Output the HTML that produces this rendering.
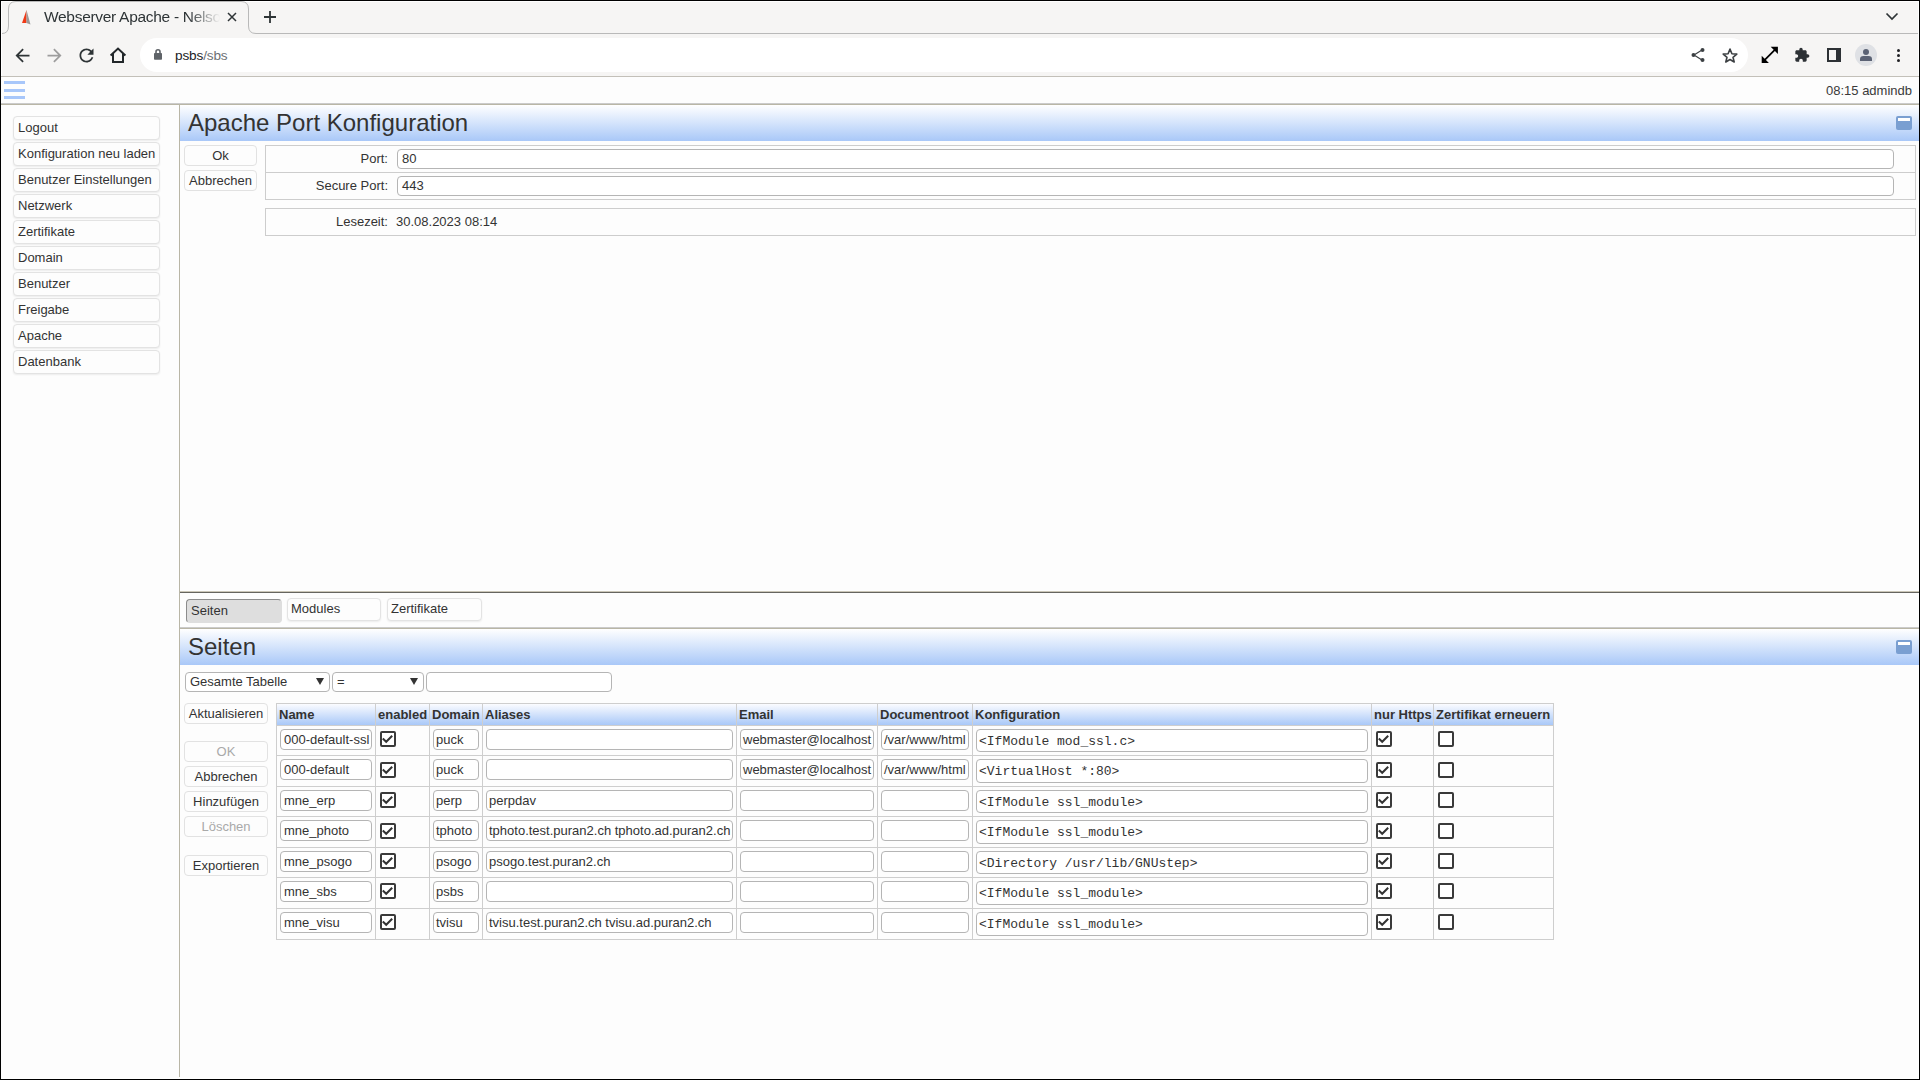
<!DOCTYPE html>
<html><head><meta charset="utf-8">
<style>
*{box-sizing:border-box;}
html,body{margin:0;padding:0;width:1920px;height:1080px;overflow:hidden;background:#000;}
body{font-family:"Liberation Sans",sans-serif;position:relative;}
.abs{position:absolute;}
#win{position:absolute;left:1px;top:1px;width:1918px;height:1078px;background:#fff;}
#tabstrip{position:absolute;left:2px;top:2px;width:1916px;height:32px;background:#f6f5f4;}
#tabline{position:absolute;left:256px;top:33px;width:1662px;height:1px;background:#b9b9b9;}
#toolbar{position:absolute;left:2px;top:34px;width:1916px;height:42px;background:#f6f5f4;}
#tbline{position:absolute;left:1px;top:76px;width:1918px;height:1px;background:#c3c0b9;}
#page{position:absolute;left:1px;top:77px;width:1917px;height:1001px;background:#fdfdfd;}
.omni{position:absolute;left:140px;top:38px;width:1608px;height:34px;border-radius:17px;background:#fff;}
.ttl{position:absolute;left:44px;top:7.8px;font-size:15.5px;letter-spacing:-0.3px;color:#2e3436;white-space:nowrap;width:182px;overflow:hidden;
 -webkit-mask-image:linear-gradient(to right,#000 144px,transparent 176px);}
.url{position:absolute;left:175px;top:47.5px;font-size:13.6px;letter-spacing:-0.15px;color:#202124;}
.url span{color:#6b6f74;}
.time{position:absolute;right:8px;top:83px;font-size:13px;color:#3a3a3a;}
.hamb{position:absolute;left:4px;width:21px;height:3px;background:#a8c7fa;}
.vline{position:absolute;left:179px;top:105px;width:1px;height:972px;background:#b9b6a6;}
.hline1{position:absolute;left:1px;top:103px;width:1918px;height:1px;background:#cbcbcb;}
.hline2{position:absolute;left:1px;top:104px;width:1918px;height:1px;background:#b9b6a6;}
.nav{position:absolute;left:13px;width:147px;height:24px;border:1px solid #e3e3e3;border-radius:4px;background:#fdfdfd;
 box-shadow:0 1px 2px rgba(0,0,0,0.07);font-size:13px;color:#333;padding-left:4px;line-height:21px;}
.btn{position:absolute;height:21px;border:1px solid #e2e2e2;border-radius:4px;background:#fdfdfd;font-size:13px;color:#333;text-align:center;line-height:19px;}
.btn.dis{color:#a9a9a9;}
.head{position:absolute;left:180px;width:1739px;height:36px;background:linear-gradient(#ffffff,#a9c8f8);}
.head .t{position:absolute;left:8px;top:4px;font-size:24px;color:#333;}
.mini{position:absolute;right:7px;top:11px;width:16px;height:14px;background:#7a9fd1;border-radius:2px;}
.mini::after{content:"";position:absolute;left:2px;top:2px;width:12px;height:3px;background:#fff;}
.box{position:absolute;border:1px solid #cdcdcd;}
.lbl{position:absolute;font-size:13px;color:#333;text-align:right;}
.inp{position:absolute;height:20px;border:1px solid #b5b5b5;border-radius:4px;background:#fff;font-size:13px;color:#333;padding-left:4px;line-height:18px;white-space:nowrap;overflow:hidden;}

.tab2{position:absolute;top:598px;height:23px;border:1px solid #e3e3e3;border-radius:4px;background:#fdfdfd;box-shadow:0 1px 2px rgba(0,0,0,0.07);font-size:13px;color:#333;padding-left:3px;line-height:20px;}
.tab2.sel{top:599px;height:24px;padding-left:4px;background:#dedede;border-color:#8c8c8c #dedede #dedede #8c8c8c;box-shadow:none;line-height:22px;}
.sel2{position:absolute;top:672px;height:20px;border:1px solid #b5b5b5;border-radius:4px;background:#fff;font-size:13px;color:#333;padding-left:4px;line-height:18px;}
.sel2 .ar{position:absolute;right:5px;top:5px;width:0;height:0;border-left:4px solid transparent;border-right:4px solid transparent;border-top:7px solid #333;}
.tcell{position:absolute;background:#cecece;}
.th{position:absolute;top:704px;height:21px;font-size:13px;font-weight:bold;color:#333;line-height:21px;padding-left:2px;white-space:nowrap;}
.cb{position:absolute;width:16px;height:16px;border:2px solid #3a3a3a;border-radius:2px;background:#fff;}
.cb svg{position:absolute;left:0;top:0;}
.mono{font-family:"Liberation Mono",monospace;}
</style></head>
<body>
<div id="win"></div>
<div id="tabstrip"></div>
<div id="tabline"></div>
<div id="toolbar"></div>
<div id="tbline"></div>
<div id="page"></div>

<!-- tab shape -->
<svg class="abs" style="left:0;top:0" width="270" height="36">
 <path d="M2 33.5 Q8.5 33.5 8.5 26 L8.5 9 Q8.5 1.5 16 1.5 L241 1.5 Q248.5 1.5 248.5 9 L248.5 26 Q248.5 33.5 256 33.5" fill="#f6f5f4" stroke="#b9b9b9" stroke-width="1"/>
</svg>
<!-- favicon -->
<svg class="abs" style="left:21px;top:9px" width="11" height="17"><path d="M5.5 1 L1 14 L5.5 14 Z" fill="#f03a17"/><path d="M5.5 1 L9.5 15.5 L5.5 14 Z" fill="#9a9a9a"/></svg>
<div class="ttl">Webserver Apache - Nelson Technologie</div>
<svg class="abs" style="left:226px;top:12px" width="12" height="10"><path d="M2 1 L10 9 M10 1 L2 9" stroke="#2e3436" stroke-width="1.5"/></svg>
<svg class="abs" style="left:263px;top:10px" width="14" height="14"><path d="M7 1 V13 M1 7 H13" stroke="#2e3436" stroke-width="1.8"/></svg>
<svg class="abs" style="left:1885px;top:12px" width="14" height="10"><path d="M1.5 1.5 L7 7 L12.5 1.5" fill="none" stroke="#2e3436" stroke-width="1.7"/></svg>

<!-- toolbar -->
<svg class="abs" style="left:11.5px;top:44.5px" width="21" height="21" viewBox="0 0 24 24"><path d="M20 11H7.83l5.59-5.59L12 4l-8 8 8 8 1.41-1.41L7.83 13H20v-2z" fill="#2e3436"/></svg>
<svg class="abs" style="left:43.5px;top:44.5px" width="21" height="21" viewBox="0 0 24 24"><path d="M12 4l-1.41 1.41L16.17 11H4v2h12.17l-5.58 5.59L12 20l8-8z" fill="#9d9d9d"/></svg>
<svg class="abs" style="left:75.5px;top:44.5px" width="21" height="21" viewBox="0 0 24 24"><path d="M17.65 6.35C16.2 4.9 14.21 4 12 4c-4.42 0-7.99 3.58-7.99 8s3.57 8 7.99 8c3.73 0 6.84-2.55 7.73-6h-2.08c-.82 2.33-3.04 4-5.650 4-3.31 0-6-2.69-6-6s2.69-6 6-6c1.66 0 3.14.69 4.22 1.780L13 11h7V4l-2.35 2.35z" fill="#2e3436"/></svg>
<svg class="abs" style="left:108px;top:45px" width="20" height="20"><path d="M2.6 10.6 L10 3.6 L17.4 10.6 M5 8.2 V17 H15 V8.2" fill="none" stroke="#22272a" stroke-width="2"/></svg>
<div class="omni"></div>
<svg class="abs" style="left:153px;top:48px" width="11" height="13"><path d="M3 6 V3.8 A2 2 0 0 1 7 3.8 V6" fill="none" stroke="#5f6368" stroke-width="1.6"/><rect x="1" y="5" width="8" height="6.8" rx="0.8" fill="#5f6368"/></svg>
<div class="url">psbs<span>/sbs</span></div>
<!-- share -->
<svg class="abs" style="left:1689.5px;top:47px" width="16" height="16"><path d="M12 3 L4 8 L12 13" fill="none" stroke="#3c4043" stroke-width="1.2"/><circle cx="12.5" cy="3" r="2" fill="#3c4043"/><circle cx="3.5" cy="8" r="2" fill="#3c4043"/><circle cx="12.5" cy="13" r="2" fill="#3c4043"/></svg>
<svg class="abs" style="left:1721px;top:46.5px" width="18" height="17"><path d="M9 2.1 L10.9 6.7 L15.8 7.1 L12 10.3 L13.2 15 L9 12.5 L4.8 15 L6 10.3 L2.2 7.1 L7.1 6.7 Z" fill="none" stroke="#3c4043" stroke-width="1.6" stroke-linejoin="round"/></svg>
<svg class="abs" style="left:1759.3px;top:44.3px" width="21.6" height="21.6" viewBox="0 0 24 24"><path d="M21 11V3h-8l3.29 3.29-10 10L3 13v8h8l-3.29-3.29 10-10z" fill="#000"/></svg>
<svg class="abs" style="left:1793.7px;top:47.3px" width="16" height="16" viewBox="0 0 24 24"><path d="M20.5 11H19V7c0-1.1-.9-2-2-2h-4V3.5C13 2.12 11.88 1 10.5 1S8 2.12 8 3.5V5H4c-1.1 0-1.99.9-1.99 2v3.8H3.5c1.49 0 2.7 1.210 2.7 2.7s-1.21 2.7-2.7 2.7H2V20c0 1.1.9 2 2 2h3.8v-1.5c0-1.49 1.21-2.7 2.7-2.7 1.49 0 2.7 1.21 2.7 2.7V22H17c1.1 0 2-.9 2-2v-4h1.5c1.38 0 2.5-1.12 2.5-2.5S21.88 11 20.5 11z" fill="#2d3135"/></svg>
<svg class="abs" style="left:1827px;top:48px" width="14" height="14"><path d="M0 0H14V14H0Z M2 2V12H9V2Z" fill="#2d3135" fill-rule="evenodd"/></svg>
<svg class="abs" style="left:1854px;top:43px" width="24" height="24"><circle cx="12" cy="12" r="11" fill="#dfe1e5"/><circle cx="12" cy="9" r="3" fill="#5b6274"/><path d="M6 18 V16 Q6 13 9.5 13 H14.5 Q18 13 18 16 V18 Z" fill="#5b6274"/></svg>
<svg class="abs" style="left:1894px;top:47px" width="9" height="17"><circle cx="4.5" cy="3.4" r="1.5" fill="#202124"/><circle cx="4.5" cy="8.5" r="1.5" fill="#202124"/><circle cx="4.5" cy="13.4" r="1.5" fill="#202124"/></svg>

<!-- page header bar -->
<div class="hamb" style="top:81px"></div>
<div class="hamb" style="top:89px"></div>
<div class="hamb" style="top:96px"></div>
<div class="time">08:15 admindb</div>
<div class="hline1"></div>
<div class="hline2"></div>
<div class="vline"></div>

<!-- nav -->
<div class="nav" style="top:116px">Logout</div>
<div class="nav" style="top:142px">Konfiguration neu laden</div>
<div class="nav" style="top:168px">Benutzer Einstellungen</div>
<div class="nav" style="top:194px">Netzwerk</div>
<div class="nav" style="top:220px">Zertifikate</div>
<div class="nav" style="top:246px">Domain</div>
<div class="nav" style="top:272px">Benutzer</div>
<div class="nav" style="top:298px">Freigabe</div>
<div class="nav" style="top:324px">Apache</div>
<div class="nav" style="top:350px">Datenbank</div>

<!-- top section -->
<div class="head" style="top:105px"><div class="t">Apache Port Konfiguration</div><div class="mini"></div></div>
<div class="btn" style="left:184px;top:145px;width:73px;">Ok</div>
<div class="btn" style="left:184px;top:170px;width:73px;">Abbrechen</div>
<div class="box" style="left:265px;top:145px;width:1651px;height:55px;"></div>
<div class="abs" style="left:266px;top:172px;width:1649px;height:1px;background:#cdcdcd"></div>
<div class="lbl" style="left:266px;top:151px;width:122px;">Port:</div>
<div class="lbl" style="left:266px;top:178px;width:122px;">Secure Port:</div>
<div class="inp" style="left:397px;top:149px;width:1497px;">80</div>
<div class="inp" style="left:397px;top:176px;width:1497px;">443</div>
<div class="box" style="left:265px;top:208px;width:1651px;height:28px;"></div>
<div class="lbl" style="left:266px;top:214px;width:122px;">Lesezeit:</div>
<div class="lbl" style="left:396px;top:214px;text-align:left">30.08.2023 08:14</div>

<div class="abs" style="left:180px;top:591px;width:1739px;height:1px;background:#cbc7b8"></div>
<div class="abs" style="left:180px;top:592px;width:1739px;height:1px;background:#66655f"></div>
<div class="tab2 sel" style="left:186px;width:96px;">Seiten</div>
<div class="tab2" style="left:287px;width:94px;">Modules</div>
<div class="tab2" style="left:387px;width:95px;">Zertifikate</div>
<div class="abs" style="left:180px;top:627px;width:1739px;height:1px;background:#cbcbcb"></div>
<div class="abs" style="left:180px;top:628px;width:1739px;height:1px;background:#b9b6a6"></div>
<div class="head" style="top:629px;height:36px;"><div class="t">Seiten</div><div class="mini"></div></div>
<div class="sel2" style="left:185px;width:145px;">Gesamte Tabelle<div class="ar"></div></div>
<div class="sel2" style="left:332px;width:92px;">=<div class="ar"></div></div>
<div class="inp" style="left:426px;top:672px;width:186px;height:20px;"></div>
<div class="btn" style="left:184px;top:703px;width:84px;">Aktualisieren</div>
<div class="btn dis" style="left:184px;top:741px;width:84px;">OK</div>
<div class="btn" style="left:184px;top:766px;width:84px;">Abbrechen</div>
<div class="btn" style="left:184px;top:791px;width:84px;">Hinzufügen</div>
<div class="btn dis" style="left:184px;top:816px;width:84px;">Löschen</div>
<div class="btn" style="left:184px;top:855px;width:84px;">Exportieren</div>
<div class="abs" style="left:277px;top:704px;width:1276px;height:21px;background:linear-gradient(#fbfcff,#a9c8f8)"></div>
<div class="tcell" style="left:276px;top:703px;width:1278px;height:1px"></div>
<div class="tcell" style="left:276px;top:725px;width:1278px;height:1px"></div>
<div class="tcell" style="left:276px;top:755px;width:1278px;height:1px"></div>
<div class="tcell" style="left:276px;top:786px;width:1278px;height:1px"></div>
<div class="tcell" style="left:276px;top:816px;width:1278px;height:1px"></div>
<div class="tcell" style="left:276px;top:847px;width:1278px;height:1px"></div>
<div class="tcell" style="left:276px;top:877px;width:1278px;height:1px"></div>
<div class="tcell" style="left:276px;top:908px;width:1278px;height:1px"></div>
<div class="tcell" style="left:276px;top:939px;width:1278px;height:1px"></div>
<div class="tcell" style="left:276px;top:703px;width:1px;height:237px"></div>
<div class="tcell" style="left:375px;top:703px;width:1px;height:237px"></div>
<div class="tcell" style="left:429px;top:703px;width:1px;height:237px"></div>
<div class="tcell" style="left:482px;top:703px;width:1px;height:237px"></div>
<div class="tcell" style="left:736px;top:703px;width:1px;height:237px"></div>
<div class="tcell" style="left:877px;top:703px;width:1px;height:237px"></div>
<div class="tcell" style="left:972px;top:703px;width:1px;height:237px"></div>
<div class="tcell" style="left:1371px;top:703px;width:1px;height:237px"></div>
<div class="tcell" style="left:1433px;top:703px;width:1px;height:237px"></div>
<div class="tcell" style="left:1553px;top:703px;width:1px;height:237px"></div>
<div class="th" style="left:277px;">Name</div>
<div class="th" style="left:376px;">enabled</div>
<div class="th" style="left:430px;">Domain</div>
<div class="th" style="left:483px;">Aliases</div>
<div class="th" style="left:737px;">Email</div>
<div class="th" style="left:878px;">Documentroot</div>
<div class="th" style="left:973px;">Konfiguration</div>
<div class="th" style="left:1372px;">nur Https</div>
<div class="th" style="left:1434px;">Zertifikat erneuern</div>
<div class="inp" style="left:280px;top:729px;width:92px;height:21px;padding-left:3px;line-height:19px;">000-default-ssl</div>
<div class="inp" style="left:433px;top:729px;width:46px;height:21px;padding-left:2px;line-height:19px;">puck</div>
<div class="inp" style="left:486px;top:729px;width:247px;height:21px;padding-left:2px;line-height:19px;"></div>
<div class="inp" style="left:740px;top:729px;width:134px;height:21px;padding-left:2px;line-height:19px;">webmaster@localhost</div>
<div class="inp" style="left:881px;top:729px;width:88px;height:21px;padding-left:2px;line-height:19px;">/var/www/html</div>
<div class="inp mono" style="left:976px;top:729px;width:392px;height:23px;padding-left:2px;padding-top:2px;line-height:19px;">&lt;IfModule mod_ssl.c&gt;</div>
<div class="cb on" style="left:380px;top:731px"><svg width="12" height="12"><path d="M0.8 5.6 L4.2 8.8 L10.2 2.8" fill="none" stroke="#333" stroke-width="2"/></svg></div>
<div class="cb on" style="left:1376px;top:731px"><svg width="12" height="12"><path d="M0.8 5.6 L4.2 8.8 L10.2 2.8" fill="none" stroke="#333" stroke-width="2"/></svg></div>
<div class="cb" style="left:1438px;top:731px"></div>
<div class="inp" style="left:280px;top:759px;width:92px;height:21px;padding-left:3px;line-height:19px;">000-default</div>
<div class="inp" style="left:433px;top:759px;width:46px;height:21px;padding-left:2px;line-height:19px;">puck</div>
<div class="inp" style="left:486px;top:759px;width:247px;height:21px;padding-left:2px;line-height:19px;"></div>
<div class="inp" style="left:740px;top:759px;width:134px;height:21px;padding-left:2px;line-height:19px;">webmaster@localhost</div>
<div class="inp" style="left:881px;top:759px;width:88px;height:21px;padding-left:2px;line-height:19px;">/var/www/html</div>
<div class="inp mono" style="left:976px;top:759px;width:392px;height:24px;padding-left:2px;padding-top:2px;line-height:19px;">&lt;VirtualHost *:80&gt;</div>
<div class="cb on" style="left:380px;top:762px"><svg width="12" height="12"><path d="M0.8 5.6 L4.2 8.8 L10.2 2.8" fill="none" stroke="#333" stroke-width="2"/></svg></div>
<div class="cb on" style="left:1376px;top:762px"><svg width="12" height="12"><path d="M0.8 5.6 L4.2 8.8 L10.2 2.8" fill="none" stroke="#333" stroke-width="2"/></svg></div>
<div class="cb" style="left:1438px;top:762px"></div>
<div class="inp" style="left:280px;top:790px;width:92px;height:21px;padding-left:3px;line-height:19px;">mne_erp</div>
<div class="inp" style="left:433px;top:790px;width:46px;height:21px;padding-left:2px;line-height:19px;">perp</div>
<div class="inp" style="left:486px;top:790px;width:247px;height:21px;padding-left:2px;line-height:19px;">perpdav</div>
<div class="inp" style="left:740px;top:790px;width:134px;height:21px;padding-left:2px;line-height:19px;"></div>
<div class="inp" style="left:881px;top:790px;width:88px;height:21px;padding-left:2px;line-height:19px;"></div>
<div class="inp mono" style="left:976px;top:790px;width:392px;height:23px;padding-left:2px;padding-top:2px;line-height:19px;">&lt;IfModule ssl_module&gt;</div>
<div class="cb on" style="left:380px;top:792px"><svg width="12" height="12"><path d="M0.8 5.6 L4.2 8.8 L10.2 2.8" fill="none" stroke="#333" stroke-width="2"/></svg></div>
<div class="cb on" style="left:1376px;top:792px"><svg width="12" height="12"><path d="M0.8 5.6 L4.2 8.8 L10.2 2.8" fill="none" stroke="#333" stroke-width="2"/></svg></div>
<div class="cb" style="left:1438px;top:792px"></div>
<div class="inp" style="left:280px;top:820px;width:92px;height:21px;padding-left:3px;line-height:19px;">mne_photo</div>
<div class="inp" style="left:433px;top:820px;width:46px;height:21px;padding-left:2px;line-height:19px;">tphoto</div>
<div class="inp" style="left:486px;top:820px;width:247px;height:21px;padding-left:2px;line-height:19px;">tphoto.test.puran2.ch tphoto.ad.puran2.ch</div>
<div class="inp" style="left:740px;top:820px;width:134px;height:21px;padding-left:2px;line-height:19px;"></div>
<div class="inp" style="left:881px;top:820px;width:88px;height:21px;padding-left:2px;line-height:19px;"></div>
<div class="inp mono" style="left:976px;top:820px;width:392px;height:24px;padding-left:2px;padding-top:2px;line-height:19px;">&lt;IfModule ssl_module&gt;</div>
<div class="cb on" style="left:380px;top:823px"><svg width="12" height="12"><path d="M0.8 5.6 L4.2 8.8 L10.2 2.8" fill="none" stroke="#333" stroke-width="2"/></svg></div>
<div class="cb on" style="left:1376px;top:823px"><svg width="12" height="12"><path d="M0.8 5.6 L4.2 8.8 L10.2 2.8" fill="none" stroke="#333" stroke-width="2"/></svg></div>
<div class="cb" style="left:1438px;top:823px"></div>
<div class="inp" style="left:280px;top:851px;width:92px;height:21px;padding-left:3px;line-height:19px;">mne_psogo</div>
<div class="inp" style="left:433px;top:851px;width:46px;height:21px;padding-left:2px;line-height:19px;">psogo</div>
<div class="inp" style="left:486px;top:851px;width:247px;height:21px;padding-left:2px;line-height:19px;">psogo.test.puran2.ch</div>
<div class="inp" style="left:740px;top:851px;width:134px;height:21px;padding-left:2px;line-height:19px;"></div>
<div class="inp" style="left:881px;top:851px;width:88px;height:21px;padding-left:2px;line-height:19px;"></div>
<div class="inp mono" style="left:976px;top:851px;width:392px;height:23px;padding-left:2px;padding-top:2px;line-height:19px;">&lt;Directory /usr/lib/GNUstep&gt;</div>
<div class="cb on" style="left:380px;top:853px"><svg width="12" height="12"><path d="M0.8 5.6 L4.2 8.8 L10.2 2.8" fill="none" stroke="#333" stroke-width="2"/></svg></div>
<div class="cb on" style="left:1376px;top:853px"><svg width="12" height="12"><path d="M0.8 5.6 L4.2 8.8 L10.2 2.8" fill="none" stroke="#333" stroke-width="2"/></svg></div>
<div class="cb" style="left:1438px;top:853px"></div>
<div class="inp" style="left:280px;top:881px;width:92px;height:21px;padding-left:3px;line-height:19px;">mne_sbs</div>
<div class="inp" style="left:433px;top:881px;width:46px;height:21px;padding-left:2px;line-height:19px;">psbs</div>
<div class="inp" style="left:486px;top:881px;width:247px;height:21px;padding-left:2px;line-height:19px;"></div>
<div class="inp" style="left:740px;top:881px;width:134px;height:21px;padding-left:2px;line-height:19px;"></div>
<div class="inp" style="left:881px;top:881px;width:88px;height:21px;padding-left:2px;line-height:19px;"></div>
<div class="inp mono" style="left:976px;top:881px;width:392px;height:24px;padding-left:2px;padding-top:2px;line-height:19px;">&lt;IfModule ssl_module&gt;</div>
<div class="cb on" style="left:380px;top:883px"><svg width="12" height="12"><path d="M0.8 5.6 L4.2 8.8 L10.2 2.8" fill="none" stroke="#333" stroke-width="2"/></svg></div>
<div class="cb on" style="left:1376px;top:883px"><svg width="12" height="12"><path d="M0.8 5.6 L4.2 8.8 L10.2 2.8" fill="none" stroke="#333" stroke-width="2"/></svg></div>
<div class="cb" style="left:1438px;top:883px"></div>
<div class="inp" style="left:280px;top:912px;width:92px;height:21px;padding-left:3px;line-height:19px;">mne_visu</div>
<div class="inp" style="left:433px;top:912px;width:46px;height:21px;padding-left:2px;line-height:19px;">tvisu</div>
<div class="inp" style="left:486px;top:912px;width:247px;height:21px;padding-left:2px;line-height:19px;">tvisu.test.puran2.ch tvisu.ad.puran2.ch</div>
<div class="inp" style="left:740px;top:912px;width:134px;height:21px;padding-left:2px;line-height:19px;"></div>
<div class="inp" style="left:881px;top:912px;width:88px;height:21px;padding-left:2px;line-height:19px;"></div>
<div class="inp mono" style="left:976px;top:912px;width:392px;height:24px;padding-left:2px;padding-top:2px;line-height:19px;">&lt;IfModule ssl_module&gt;</div>
<div class="cb on" style="left:380px;top:914px"><svg width="12" height="12"><path d="M0.8 5.6 L4.2 8.8 L10.2 2.8" fill="none" stroke="#333" stroke-width="2"/></svg></div>
<div class="cb on" style="left:1376px;top:914px"><svg width="12" height="12"><path d="M0.8 5.6 L4.2 8.8 L10.2 2.8" fill="none" stroke="#333" stroke-width="2"/></svg></div>
<div class="cb" style="left:1438px;top:914px"></div>
</body></html>
